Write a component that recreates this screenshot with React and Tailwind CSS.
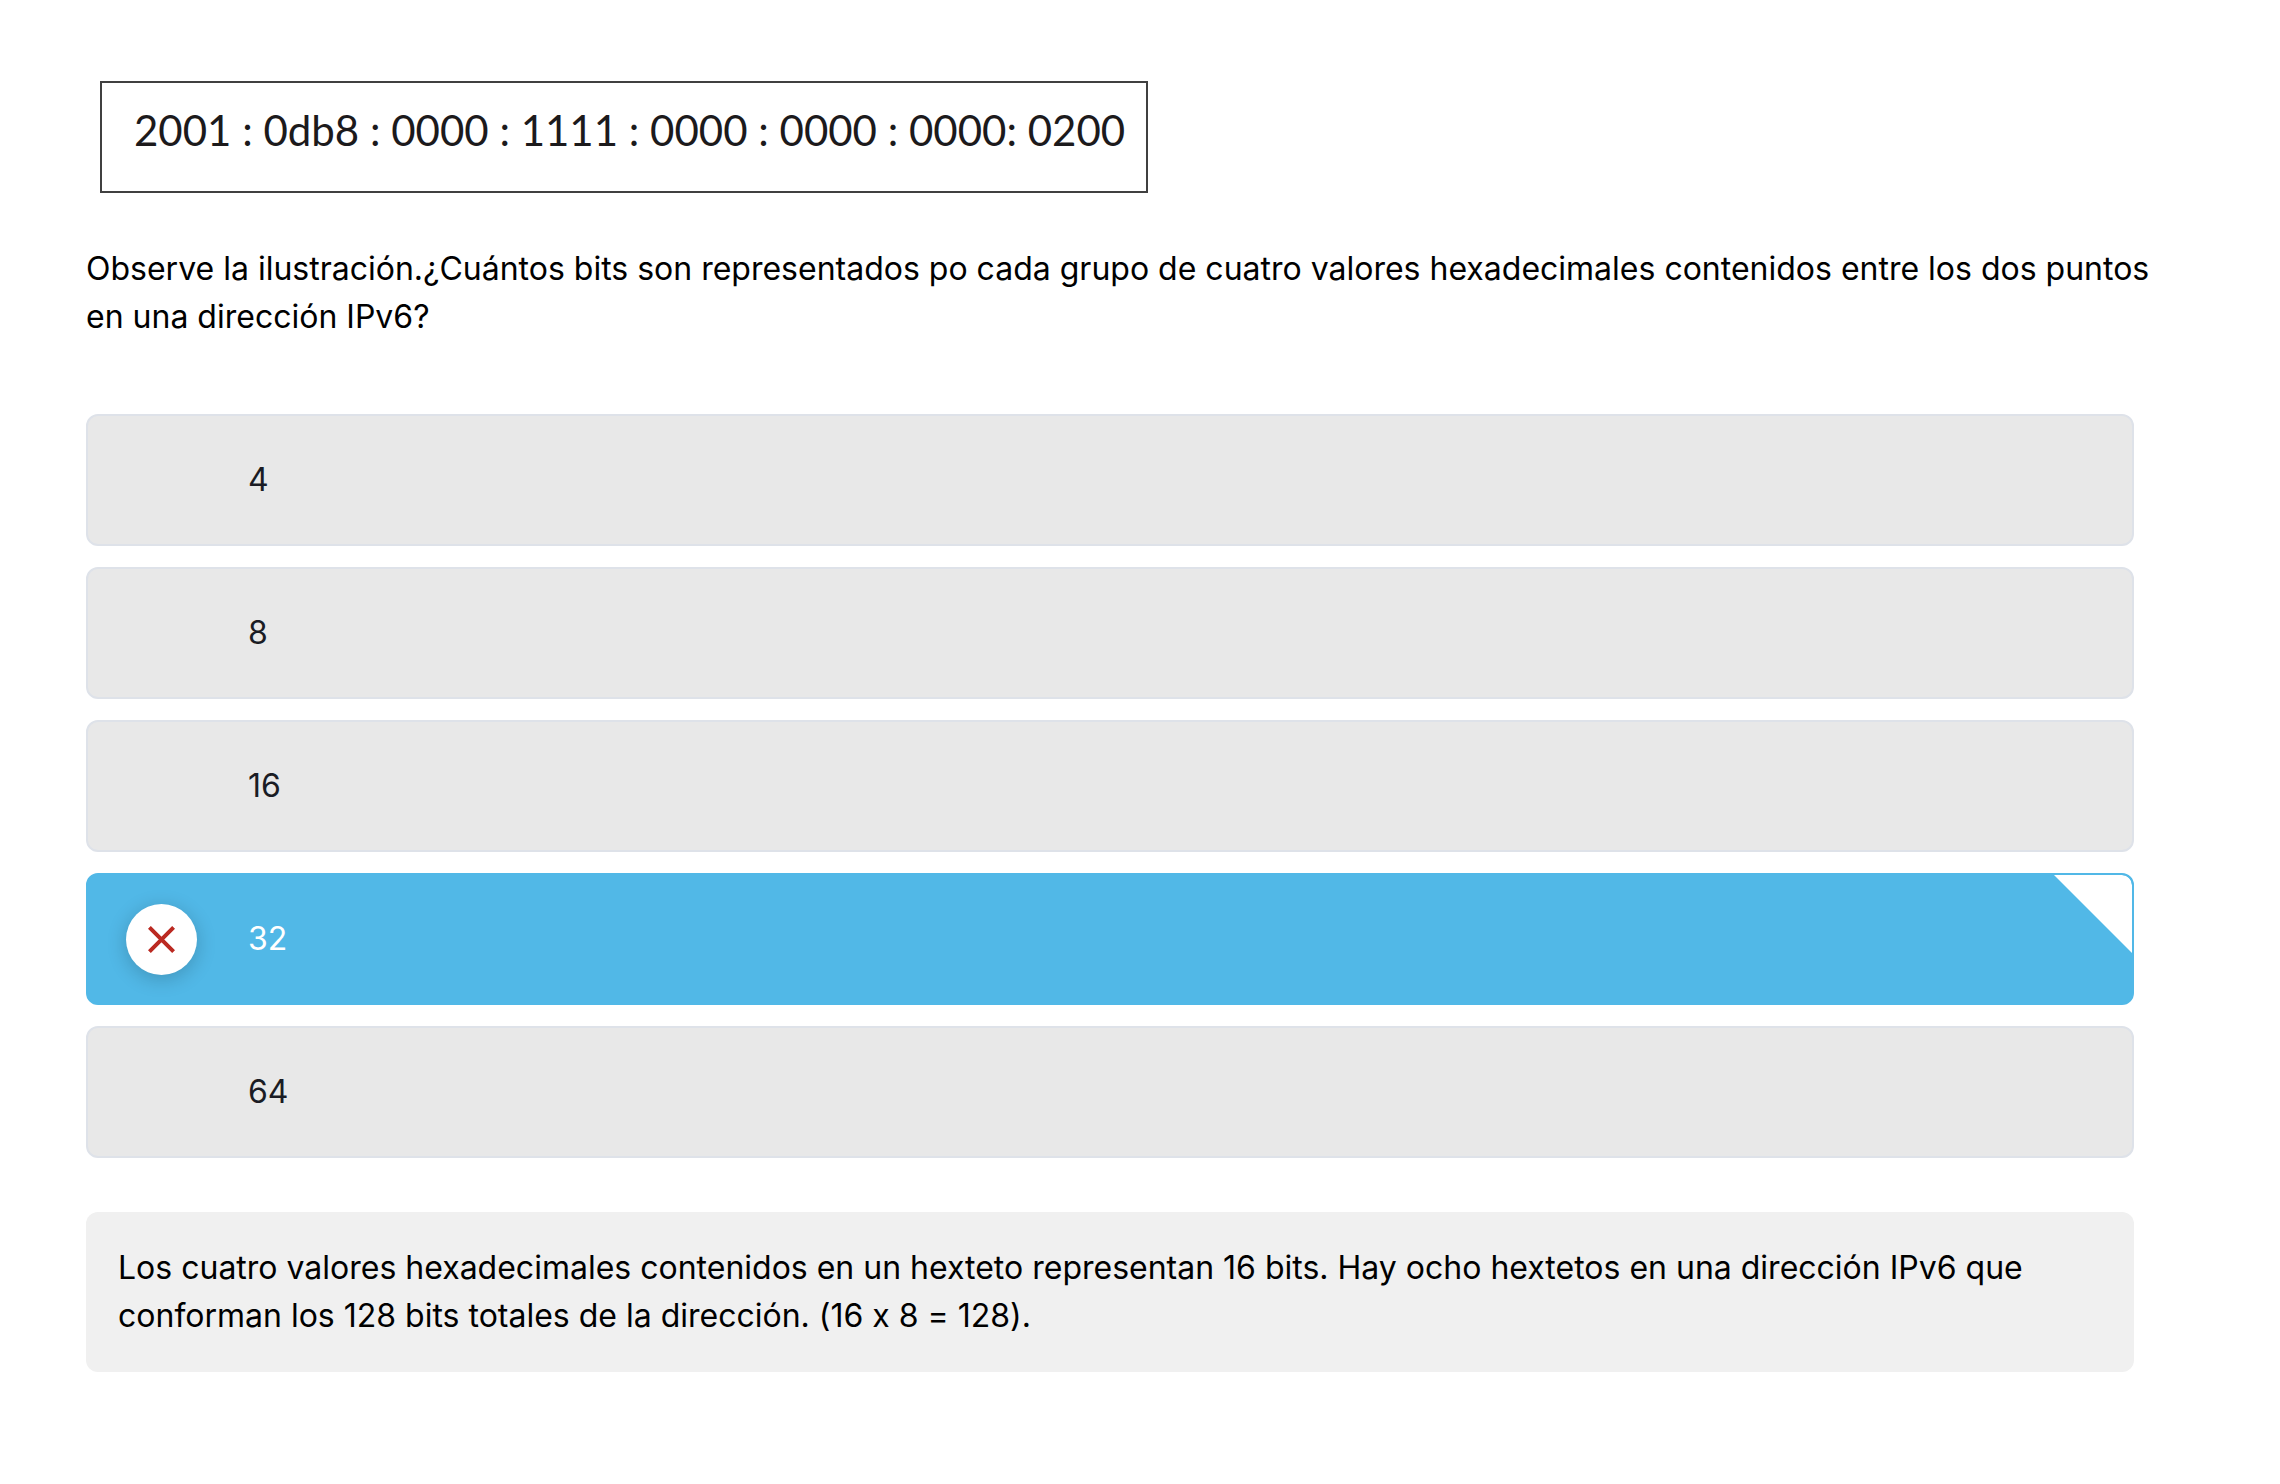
import { useState } from "react";

const options = ["4", "8", "16", "32", "64"];

function WrongBadge() {
  return (
    <span className="flex size-[71px] items-center justify-center rounded-full bg-white shadow-[0_4px_20px_rgba(0,0,0,0.2)]">
      <svg viewBox="0 0 27 27" className="size-[27px]" fill="none" stroke="#bb2a22" strokeWidth="4" aria-hidden="true">
        <path d="M1.4 1.4 L25.6 25.6 M25.6 1.4 L1.4 25.6" />
      </svg>
    </span>
  );
}

function Option({ value, selected, onSelect }) {
  return (
    <label
      className={
        selected
          ? "relative flex cursor-pointer items-center overflow-hidden rounded-xl border-2 border-[#51b8e7] bg-[#51b8e7] py-10 text-white"
          : "relative flex cursor-pointer items-center overflow-hidden rounded-xl border-2 border-[#dee2e9] bg-[#e8e8e8] py-10 text-[#1a1c24]"
      }
    >
      <input
        type="radio"
        name="respuesta"
        value={value}
        checked={selected}
        onChange={() => onSelect(value)}
        className="sr-only"
      />
      <span className="-my-3 flex w-40 shrink-0 pl-[38px]">{selected && <WrongBadge />}</span>
      <span>{value}</span>
      {selected && (
        <svg viewBox="0 0 78 78" className="absolute top-0 right-0 size-[78px]" aria-hidden="true">
          <path d="M0 0 H68 A10 10 0 0 1 78 10 V78 Z" fill="#ffffff" />
        </svg>
      )}
    </label>
  );
}

export default function App() {
  const [answer, setAnswer] = useState("32");

  return (
    <main className="min-h-screen bg-white pt-[81px] pr-[146px] pb-20 pl-[86px] font-['Inter',sans-serif] text-[32px] leading-[48px] text-black [font-feature-settings:'calt'_0]">
      <figure className="ml-3.5 w-fit border-2 border-[#404040] pt-[23px] pr-[21px] pb-[37px] pl-8 font-['Lato',sans-serif] text-[42px] leading-[48px] text-[#1c1a1c]">
        2001 : 0db8 : 0000 : 1111 : 0000 : 0000 : 0000: 0200
      </figure>

      <form className="mt-[52px]">
        <fieldset>
          <legend className="-mr-5">
            Observe la ilustración.¿Cuántos bits son representados po cada grupo de cuatro valores hexadecimales
            contenidos entre los dos puntos en una dirección IPv6?
          </legend>
          <div className="mt-[73px] flex flex-col gap-[21px]">
            {options.map((value) => (
              <Option key={value} value={value} selected={value === answer} onSelect={setAnswer} />
            ))}
          </div>
        </fieldset>
      </form>

      <p className="mt-[54px] rounded-xl bg-[#f0f0f0] p-8">
        Los cuatro valores hexadecimales contenidos en un hexteto representan 16 bits. Hay ocho hextetos en una
        dirección IPv6 que conforman los 128 bits totales de la dirección. (16 x 8 = 128).
      </p>
    </main>
  );
}
